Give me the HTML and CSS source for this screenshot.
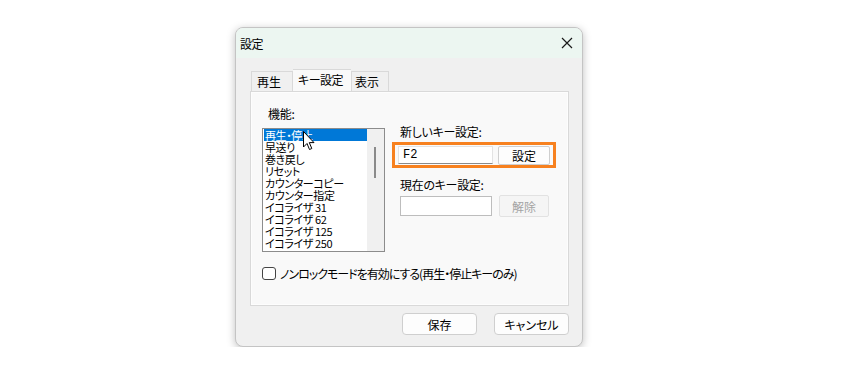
FILE: index.html
```html
<!DOCTYPE html>
<html lang="ja">
<head>
    <meta charset="UTF-8">
    <meta name="viewport" content="width=device-width, initial-scale=1.0">
    <title>設定</title>
    <link rel="stylesheet" href="styles.css">
</head>
<body>
    <div class="dialog">
        <div class="titlebar">
            <span class="title">設定</span>
            <svg class="close" width="12" height="12" viewBox="0 0 12 12">
                <path d="M1 1 L11 11 M11 1 L1 11" stroke="#1a1a1a" stroke-width="1.2" fill="none"/>
            </svg>
        </div>
        <div class="content">
            <div class="tabs">
                <div class="tab tab-play">再生</div>
                <div class="tab active">キー設定</div>
                <div class="tab tab-view">表示</div>
            </div>
            <div class="panel">
                <div class="columns">
                    <div class="col-left">
                        <div class="label">機能:</div>
                        <div class="listbox">
                            <ul class="items">
                                <li class="selected">再生・停止</li>
                                <li>早送り</li>
                                <li>巻き戻し</li>
                                <li>リセット</li>
                                <li>カウンターコピー</li>
                                <li>カウンター指定</li>
                                <li>イコライザ 31</li>
                                <li>イコライザ 62</li>
                                <li>イコライザ 125</li>
                                <li>イコライザ 250</li>
                            </ul>
                            <div class="scrollbar"><div class="thumb"></div></div>
                            <svg class="cursor" width="12" height="20" viewBox="0 0 12 20">
                                <path d="M0.5 0.5 L0.5 16 L4 12.5 L6.5 18.5 L8.8 17.5 L6.3 11.6 L11 11.6 Z" fill="#fff" stroke="#000" stroke-width="1"/>
                            </svg>
                        </div>
                    </div>
                    <div class="col-right">
                        <div class="label">新しいキー設定:</div>
                        <div class="highlight">
                            <div class="textbox">F2</div>
                            <button class="btn small">設定</button>
                        </div>
                        <div class="label label-current">現在のキー設定:</div>
                        <div class="row">
                            <div class="textbox empty"></div>
                            <button class="btn small" disabled>解除</button>
                        </div>
                    </div>
                </div>
                <div class="check">
                    <span class="box"></span>
                    <span>ノンロックモードを有効にする(再生・停止キーのみ)</span>
                </div>
            </div>
            <div class="footer">
                <button class="btn">保存</button>
                <button class="btn">キャンセル</button>
            </div>
        </div>
    </div>
</body>
</html>
```

FILE: styles.css
```css
body {
    margin: 0;
    background: #fff;
    font-family: "Noto Sans CJK JP", "Noto Sans", sans-serif;
    font-size: 12px;
    color: #000;
    font-feature-settings: "palt";
}

.dialog {
    box-sizing: border-box;
    width: 348px;
    height: 320px;
    margin: 27px 0 0 235px;
    border: 1px solid #c4c4c4;
    border-radius: 8px;
    background: #f0f0f0;
    box-shadow: 0 2px 8px rgba(0, 0, 0, 0.25);
    overflow: hidden;
}

.titlebar {
    height: 30px;
    display: flex;
    align-items: center;
    justify-content: space-between;
    padding: 0 9px 0 4px;
    background: #ecf6f1;
}

.title {
    font-size: 12px;
    letter-spacing: -0.5px;
}

.content {
    padding: 11px 13px 0 14px;
}

.tabs {
    display: flex;
    align-items: flex-end;
    height: 22px;
    margin-left: 1px;
}

.tab {
    box-sizing: border-box;
    height: 20px;
    line-height: 19px;
    padding-left: 5px;
    border: 1px solid #d9d9d9;
    border-bottom: none;
    background: #f0f0f0;
    font-size: 12px;
}

.tab-play {
    width: 42px;
}

.tab-view {
    width: 38px;
    padding-left: 3px;
}

.tab.active {
    width: 58px;
    height: 22px;
    line-height: 20px;
    background: #f9f9f9;
    border-left: none;
    border-right: none;
    letter-spacing: -0.5px;
}

.panel {
    box-sizing: border-box;
    height: 215px;
    border: 1px solid #d9d9d9;
    background: #f9f9f9;
    box-shadow: inset 0 0 0 1px #fdfdfd;
    padding: 15px 0 0 11px;
}

.columns {
    display: flex;
}

.label {
    height: 14px;
    line-height: 14px;
    margin-left: 6px;
    margin-bottom: 7px;
    letter-spacing: -0.3px;
}

.listbox {
    position: relative;
    box-sizing: border-box;
    width: 123px;
    height: 124px;
    border: 1px solid #8c8c8c;
    background: #fff;
    display: flex;
}

.items {
    list-style: none;
    margin: 0;
    padding: 0 0 0 1px;
    flex: 1;
}

.items li {
    height: 12px;
    line-height: 12px;
    padding-left: 1px;
    font-size: 11px;
    white-space: nowrap;
    letter-spacing: -0.4px;
}

.items li.selected {
    background: #0078d7;
    color: #fff;
}

.scrollbar {
    width: 17px;
    background: #f0f0f0;
    position: relative;
}

.thumb {
    position: absolute;
    left: 7px;
    top: 18px;
    width: 2px;
    height: 31px;
    background: #8a8a8a;
}

.cursor {
    position: absolute;
    left: 40px;
    top: 2px;
}

.col-right {
    margin-left: 7px;
    padding-top: 18px;
}

.col-right .label {
    margin-left: 8px;
    margin-bottom: 3px;
}

.label-current {
    margin-top: 10px;
}

.highlight {
    box-sizing: border-box;
    width: 164px;
    height: 26px;
    border: 3px solid #f7811f;
    display: flex;
    align-items: center;
    padding-left: 3px;
    gap: 5px;
}

.textbox {
    box-sizing: border-box;
    width: 95px;
    height: 18px;
    background: #fff;
    border: 1px solid #e3e3e3;
    border-bottom-color: #8a8a8a;
    padding-left: 4px;
    line-height: 16px;
    font-family: "Liberation Mono", monospace;
    font-size: 12px;
}

.textbox.empty {
    width: 92px;
    height: 20px;
    border: 1px solid #bdbdbd;
}

.row {
    display: flex;
    align-items: center;
    gap: 7px;
    margin-left: 8px;
}

.btn {
    box-sizing: border-box;
    width: 75px;
    height: 22px;
    border: 1px solid #cfcfcf;
    border-radius: 4px;
    background: #fdfdfd;
    font-family: "Noto Sans CJK JP", "Noto Sans", sans-serif;
    font-size: 12px;
    color: #000;
    padding: 0;
    font-feature-settings: "palt";
}

.btn.small {
    width: 52px;
    height: 19px;
    border-radius: 2px;
}

.btn:disabled {
    width: 50px;
    height: 22px;
    color: #a3a3a3;
    background: #f5f5f5;
    border-color: #e2e2e2;
}

.check {
    display: flex;
    align-items: center;
    gap: 4px;
    margin-top: 13px;
    letter-spacing: -1px;
}

.box {
    box-sizing: border-box;
    width: 14px;
    height: 13px;
    border: 1px solid #444;
    border-radius: 3px;
    background: #fff;
}

.footer {
    display: flex;
    justify-content: flex-end;
    gap: 17px;
    margin-top: 7px;
}
```
